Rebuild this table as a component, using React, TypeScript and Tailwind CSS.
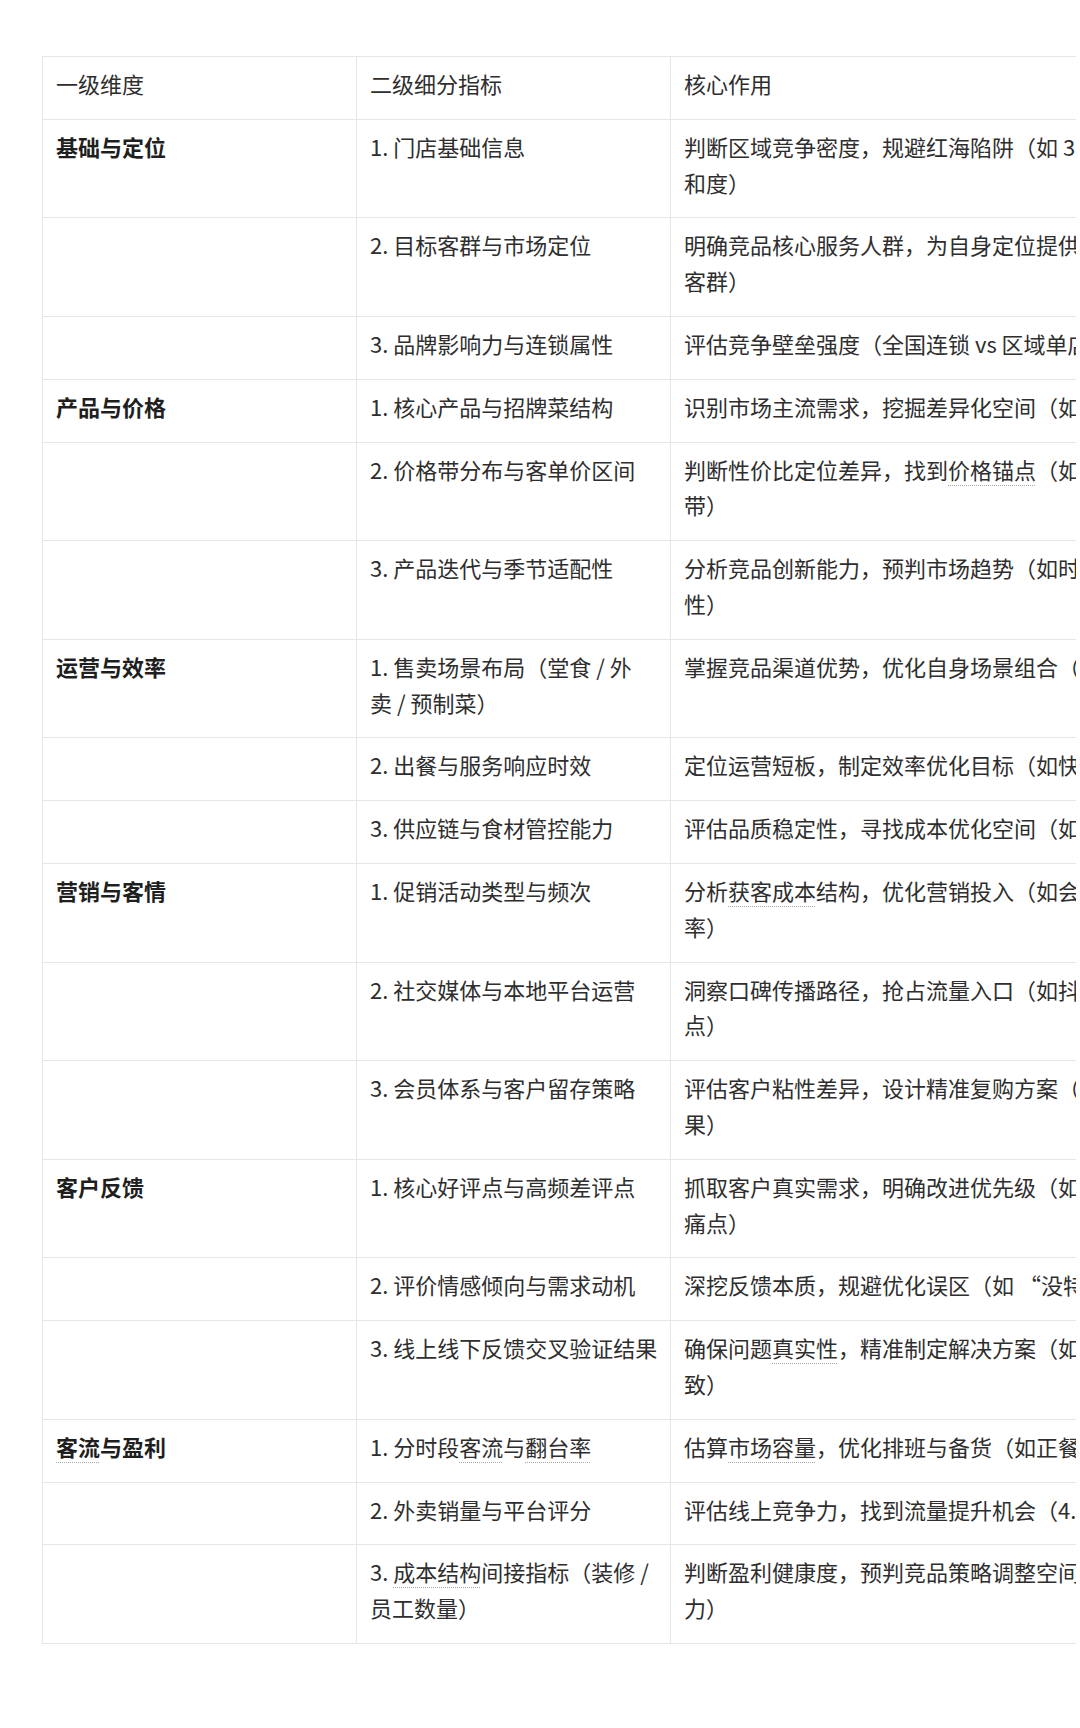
import React from "react";

type Seg = string | { u: string };
type Row = {
  dim?: Seg[];
  sub: Seg[][];
  core: Seg[][];
};

const rows: Row[] = [
  {
    dim: ["基础与定位"],
    sub: [["1. 门店基础信息"]],
    core: [["判断区域竞争密度，规避红海陷阱（如 3 公里内同类门店数量与饱"], ["和度）"]],
  },
  {
    sub: [["2. 目标客群与市场定位"]],
    core: [["明确竞品核心服务人群，为自身定位提供参考（如白领、家庭、学生"], ["客群）"]],
  },
  {
    sub: [["3. 品牌影响力与连锁属性"]],
    core: [["评估竞争壁垒强度（全国连锁 vs 区域单店 vs 个体门店）"]],
  },
  {
    dim: ["产品与价格"],
    sub: [["1. 核心产品与招牌菜结构"]],
    core: [["识别市场主流需求，挖掘差异化空间（如招牌菜同质化程度）"]],
  },
  {
    sub: [["2. 价格带分布与客单价区间"]],
    core: [["判断性价比定位差异，找到", { u: "价格锚点" }, "（如人均 30-50 元主流价格"], ["带）"]],
  },
  {
    sub: [["3. 产品迭代与季节适配性"]],
    core: [["分析竞品创新能力，预判市场趋势（如时令菜、新品上新频率与季节"], ["性）"]],
  },
  {
    dim: ["运营与效率"],
    sub: [["1. 售卖场景布局（堂食 / 外"], ["卖 / 预制菜）"]],
    core: [["掌握竞品渠道优势，优化自身场景组合（如外卖占比、预制菜销售）"]],
  },
  {
    sub: [["2. 出餐与服务响应时效"]],
    core: [["定位运营短板，制定效率优化目标（如快餐出餐时间控制在 5 分钟内）"]],
  },
  {
    sub: [["3. 供应链与食材管控能力"]],
    core: [["评估品质稳定性，寻找成本优化空间（如中央厨房配送、食材损耗率）"]],
  },
  {
    dim: ["营销与客情"],
    sub: [["1. 促销活动类型与频次"]],
    core: [["分析", { u: "获客成本" }, "结构，优化营销投入（如会员日、满减活动的转化"], ["率）"]],
  },
  {
    sub: [["2. 社交媒体与本地平台运营"]],
    core: [["洞察口碑传播路径，抢占流量入口（如抖音、小红书探店与热门打卡"], ["点）"]],
  },
  {
    sub: [["3. 会员体系与客户留存策略"]],
    core: [["评估客户粘性差异，设计精准复购方案（如储值卡、积分兑换的留存效"], ["果）"]],
  },
  {
    dim: ["客户反馈"],
    sub: [["1. 核心好评点与高频差评点"]],
    core: [["抓取客户真实需求，明确改进优先级（如 “上菜慢”“分量少” 等高频"], ["痛点）"]],
  },
  {
    sub: [["2. 评价情感倾向与需求动机"]],
    core: [["深挖反馈本质，规避优化误区（如 “没特色” 实为口味记忆点不足）"]],
  },
  {
    sub: [["3. 线上线下反馈交叉验证结果"]],
    core: [["确保问题", { u: "真实性" }, "，精准制定解决方案（如线上差评与实地体验是否一"], ["致）"]],
  },
  {
    dim: [{ u: "客流" }, "与盈利"],
    sub: [["1. 分时段", { u: "客流" }, "与", { u: "翻台率" }]],
    core: [["估算", { u: "市场容量" }, "，优化排班与备货（如正餐高峰翻台 3 次以上）"]],
  },
  {
    sub: [["2. 外卖销量与平台评分"]],
    core: [["评估线上竞争力，找到流量提升机会（4.5 分以上店铺的共性特征）"]],
  },
  {
    sub: [["3. ", { u: "成本结构" }, "间接指标（装修 /"], ["员工数量）"]],
    core: [["判断盈利健康度，预判竞品策略调整空间（如租金与人力成本的承受能"], ["力）"]],
  },
];

function Segs({ segs }: { segs: Seg[] }) {
  return (
    <>
      {segs.map((s, i) =>
        typeof s === "string" ? (
          <React.Fragment key={i}>{s}</React.Fragment>
        ) : (
          <span
            key={i}
            className="underline decoration-dotted decoration-[#a8a8a8] decoration-1 underline-offset-[6px]"
          >
            {s.u}
          </span>
        )
      )}
    </>
  );
}

function Lines({ lines }: { lines: Seg[][] }) {
  return (
    <>
      {lines.map((l, i) => (
        <div key={i} className="whitespace-nowrap">
          <Segs segs={l} />
        </div>
      ))}
    </>
  );
}

const cell =
  "border border-[#e6e6e6] px-[13px] pt-[9px] pb-[17px] align-top text-left leading-[35.8px] text-[22px]";

export default function App() {
  return (
    <div
      className="min-h-[1728px] w-[1080px] bg-white text-[#2e2e2e]"
      style={{ fontFamily: '"Noto Sans CJK SC", "Noto Sans", sans-serif' }}
    >
      <div className="w-[1076px] overflow-hidden pl-[42px] pt-[56px]">
        <table className="w-[1300px] table-fixed border-collapse">
          <colgroup>
            <col className="w-[314px]" />
            <col className="w-[314px]" />
            <col className="w-[672px]" />
          </colgroup>
          <thead>
            <tr>
              <th className={`${cell} font-normal`}>一级维度</th>
              <th className={`${cell} font-normal`}>二级细分指标</th>
              <th className={`${cell} font-normal`}>核心作用</th>
            </tr>
          </thead>
          <tbody>
            {rows.map((r, i) => (
              <tr key={i}>
                <td className={`${cell} font-bold text-[#1f1f1f]`}>
                  {r.dim ? <Segs segs={r.dim} /> : null}
                </td>
                <td className={cell}>
                  <Lines lines={r.sub} />
                </td>
                <td className={`${cell} overflow-hidden`}>
                  <Lines lines={r.core} />
                </td>
              </tr>
            ))}
          </tbody>
        </table>
      </div>
    </div>
  );
}
